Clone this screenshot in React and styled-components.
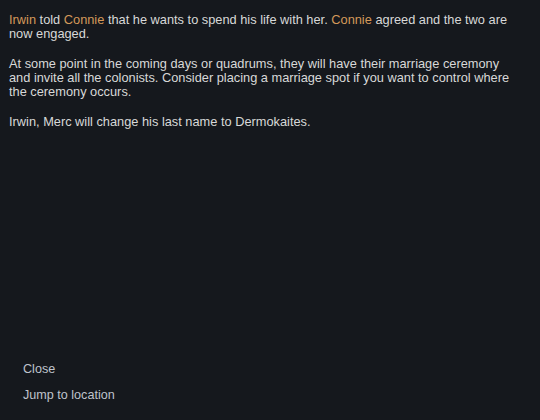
import React from 'react';
import styled, { createGlobalStyle } from 'styled-components';

const GlobalStyle = createGlobalStyle`
  html, body {
    margin: 0;
    padding: 0;
    background-color: #15181d;
  }
`;

const Window = styled.div`
  width: 540px;
  height: 420px;
  box-sizing: border-box;
  background-color: #15181d;
  display: flex;
  flex-direction: column;
  justify-content: space-between;
  padding: 13px 0 17px 9px;
  font-family: 'Liberation Sans', Arial, sans-serif;
`;

const Body = styled.div`
  display: flex;
  flex-direction: column;
  gap: 16px;
  width: 505px;
`;

const Paragraph = styled.p`
  margin: 0;
  font-size: 12.8px;
  line-height: 14px;
  color: #d8d8d8;
`;

const Name = styled.span`
  color: #d4995a;
`;

const Options = styled.div`
  display: flex;
  flex-direction: column;
  gap: 10px;
  padding-left: 14px;
`;

const Option = styled.div`
  font-size: 12.6px;
  line-height: 16px;
  color: #bfc3cc;
  cursor: pointer;
`;

const App = () => {
  return (
    <>
      <GlobalStyle />
      <Window>
        <Body>
          <Paragraph>
            <Name>Irwin</Name> told <Name>Connie</Name> that he wants to spend his life with her.{' '}
            <Name>Connie</Name> agreed and the two are now engaged.
          </Paragraph>
          <Paragraph>
            At some point in the coming days or quadrums, they will have their marriage ceremony
            and invite all the colonists. Consider placing a marriage spot if you want to control
            where the ceremony occurs.
          </Paragraph>
          <Paragraph>Irwin, Merc will change his last name to Dermokaites.</Paragraph>
        </Body>
        <Options>
          <Option>Close</Option>
          <Option>Jump to location</Option>
        </Options>
      </Window>
    </>
  );
};

export default App;
